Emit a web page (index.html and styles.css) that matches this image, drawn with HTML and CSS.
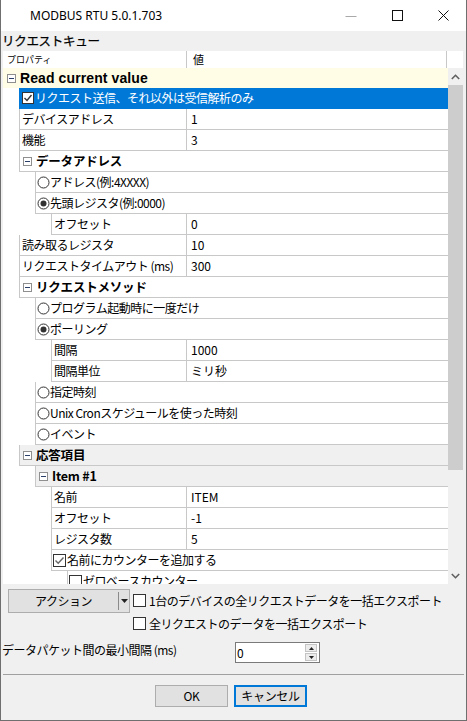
FILE: index.html
```html
<!DOCTYPE html>
<html lang="ja">
<head>
<meta charset="utf-8">
<title>MODBUS RTU</title>
<link rel="stylesheet" href="styles.css">
</head>
<body>
<div class="win">
  <div class="titlebar">
    <span class="title">MODBUS RTU 5.0.1.703</span>
    <div class="wctrls">
      <span class="wbtn"><svg width="12" height="12" viewBox="0 0 12 12"><line x1="0.5" y1="6.5" x2="11.5" y2="6.5" stroke="#a9a9a9" stroke-width="1"/></svg></span>
      <span class="wbtn"><svg width="11" height="11" viewBox="0 0 11 11"><rect x="0.5" y="0.5" width="10" height="10" fill="none" stroke="#111" stroke-width="1"/></svg></span>
      <span class="wbtn"><svg width="11" height="11" viewBox="0 0 11 11"><path d="M0.5 0.5 L10.5 10.5 M10.5 0.5 L0.5 10.5" stroke="#111" stroke-width="1"/></svg></span>
    </div>
  </div>

  <div class="qlabel">リクエストキュー</div>

  <div class="grid">
    <div class="ghead">
      <div class="hname">プロパティ</div>
      <div class="hval">値</div>
    </div>
    <div class="gbody">
      <div class="rows">
        <div class="row top">
          <svg class="minus" width="9" height="9" viewBox="0 0 9 9"><rect x="0.5" y="0.5" width="8" height="8" fill="#fff" stroke="#8f8f8f"/><line x1="2" y1="4.5" x2="7" y2="4.5" stroke="#2b3f6b"/></svg>
          <span class="btxt">Read current value</span>
        </div>
        <div class="row g1 sel"><div class="gut"></div><div class="main">
          <svg class="cb" width="12" height="12" viewBox="0 0 12 12"><rect x="0.5" y="0.5" width="11" height="11" fill="#fff" stroke="#333"/><polyline points="2.5,6 5,8.5 9.5,3" fill="none" stroke="#333" stroke-width="1.4"/></svg>
          <span class="tx">リクエスト送信、それ以外は受信解析のみ</span></div></div>
        <div class="row g1"><div class="gut"></div><div class="main"><div class="nm">デバイスアドレス</div><div class="val">1</div></div></div>
        <div class="row g1"><div class="gut"></div><div class="main"><div class="nm">機能</div><div class="val">3</div></div></div>
        <div class="row g1"><div class="gut"></div><div class="main grp">
          <svg class="minus" width="9" height="9" viewBox="0 0 9 9"><rect x="0.5" y="0.5" width="8" height="8" fill="#fff" stroke="#8f8f8f"/><line x1="2" y1="4.5" x2="7" y2="4.5" stroke="#2b3f6b"/></svg>
          <span class="gtx">データアドレス</span></div></div>
        <div class="row g2"><div class="gut"></div><div class="main opt">
          <svg class="rd" width="13" height="13" viewBox="0 0 13 13"><circle cx="6.5" cy="6.5" r="5.5" fill="#fff" stroke="#333"/></svg>
          <span class="tx">アドレス(例:4XXXX)</span></div></div>
        <div class="row g2"><div class="gut"></div><div class="main opt">
          <svg class="rd" width="13" height="13" viewBox="0 0 13 13"><circle cx="6.5" cy="6.5" r="5.5" fill="#fff" stroke="#333"/><circle cx="6.5" cy="6.5" r="3" fill="#333"/></svg>
          <span class="tx">先頭レジスタ(例:0000)</span></div></div>
        <div class="row g3"><div class="gut"></div><div class="main"><div class="nm">オフセット</div><div class="val">0</div></div></div>
        <div class="row g1"><div class="gut"></div><div class="main"><div class="nm">読み取るレジスタ</div><div class="val">10</div></div></div>
        <div class="row g1"><div class="gut"></div><div class="main"><div class="nm">リクエストタイムアウト (ms)</div><div class="val">300</div></div></div>
        <div class="row g1"><div class="gut"></div><div class="main grp">
          <svg class="minus" width="9" height="9" viewBox="0 0 9 9"><rect x="0.5" y="0.5" width="8" height="8" fill="#fff" stroke="#8f8f8f"/><line x1="2" y1="4.5" x2="7" y2="4.5" stroke="#2b3f6b"/></svg>
          <span class="gtx">リクエストメソッド</span></div></div>
        <div class="row g2"><div class="gut"></div><div class="main opt">
          <svg class="rd" width="13" height="13" viewBox="0 0 13 13"><circle cx="6.5" cy="6.5" r="5.5" fill="#fff" stroke="#333"/></svg>
          <span class="tx">プログラム起動時に一度だけ</span></div></div>
        <div class="row g2"><div class="gut"></div><div class="main opt">
          <svg class="rd" width="13" height="13" viewBox="0 0 13 13"><circle cx="6.5" cy="6.5" r="5.5" fill="#fff" stroke="#333"/><circle cx="6.5" cy="6.5" r="3" fill="#333"/></svg>
          <span class="tx">ポーリング</span></div></div>
        <div class="row g3"><div class="gut"></div><div class="main"><div class="nm">間隔</div><div class="val">1000</div></div></div>
        <div class="row g3"><div class="gut"></div><div class="main"><div class="nm">間隔単位</div><div class="val">ミリ秒</div></div></div>
        <div class="row g2"><div class="gut"></div><div class="main opt">
          <svg class="rd" width="13" height="13" viewBox="0 0 13 13"><circle cx="6.5" cy="6.5" r="5.5" fill="#fff" stroke="#333"/></svg>
          <span class="tx">指定時刻</span></div></div>
        <div class="row g2"><div class="gut"></div><div class="main opt">
          <svg class="rd" width="13" height="13" viewBox="0 0 13 13"><circle cx="6.5" cy="6.5" r="5.5" fill="#fff" stroke="#333"/></svg>
          <span class="tx">Unix Cronスケジュールを使った時刻</span></div></div>
        <div class="row g2"><div class="gut"></div><div class="main opt">
          <svg class="rd" width="13" height="13" viewBox="0 0 13 13"><circle cx="6.5" cy="6.5" r="5.5" fill="#fff" stroke="#333"/></svg>
          <span class="tx">イベント</span></div></div>
        <div class="row g1"><div class="gut"></div><div class="main grp shade">
          <svg class="minus" width="9" height="9" viewBox="0 0 9 9"><rect x="0.5" y="0.5" width="8" height="8" fill="#fff" stroke="#8f8f8f"/><line x1="2" y1="4.5" x2="7" y2="4.5" stroke="#2b3f6b"/></svg>
          <span class="gtx">応答項目</span></div></div>
        <div class="row g2"><div class="gut"></div><div class="main grp shade">
          <svg class="minus" width="9" height="9" viewBox="0 0 9 9"><rect x="0.5" y="0.5" width="8" height="8" fill="#fff" stroke="#8f8f8f"/><line x1="2" y1="4.5" x2="7" y2="4.5" stroke="#2b3f6b"/></svg>
          <span class="gtx">Item #1</span></div></div>
        <div class="row g3"><div class="gut"></div><div class="main"><div class="nm">名前</div><div class="val">ITEM</div></div></div>
        <div class="row g3"><div class="gut"></div><div class="main"><div class="nm">オフセット</div><div class="val">-1</div></div></div>
        <div class="row g3"><div class="gut"></div><div class="main"><div class="nm">レジスタ数</div><div class="val">5</div></div></div>
        <div class="row g3"><div class="gut"></div><div class="main opt">
          <svg class="cb2" width="13" height="13" viewBox="0 0 13 13"><rect x="0.5" y="0.5" width="12" height="12" fill="#fff" stroke="#333"/><polyline points="2.5,6.5 5.2,9.2 10.5,3.5" fill="none" stroke="#666" stroke-width="1.4"/></svg>
          <span class="tx">名前にカウンターを追加する</span></div></div>
        <div class="row g4"><div class="gut"></div><div class="main opt">
          <svg class="cb2" width="13" height="13" viewBox="0 0 13 13"><rect x="0.5" y="0.5" width="12" height="12" fill="#fff" stroke="#333"/></svg>
          <span class="tx">ゼロベースカウンター</span></div></div>
      </div>
      <div class="vscroll">
        <div class="sbtn"><svg width="9" height="6" viewBox="0 0 9 6"><polyline points="0.8,5 4.5,1.3 8.2,5" fill="none" stroke="#606060" stroke-width="1.6"/></svg></div>
        <div class="thumb"></div>
        <div class="track"></div>
        <div class="sbtn"><svg width="9" height="6" viewBox="0 0 9 6"><polyline points="0.8,1 4.5,4.7 8.2,1" fill="none" stroke="#606060" stroke-width="1.6"/></svg></div>
      </div>
    </div>
  </div>

  <div class="exprow">
    <div class="actbtn">
      <span class="actlabel">アクション</span>
      <span class="actdrop"><svg width="7" height="4" viewBox="0 0 7 4"><polygon points="0,0 7,0 3.5,4" fill="#222"/></svg></span>
    </div>
    <div class="chks">
      <label class="chk"><span class="box"></span><span>1台のデバイスの全リクエストデータを一括エクスポート</span></label>
      <label class="chk"><span class="box"></span><span>全リクエストのデータを一括エクスポート</span></label>
    </div>
  </div>

  <div class="minrow">
    <span class="mlabel">データパケット間の最小間隔 (ms)</span>
    <div class="spin">
      <span class="spinval">0</span>
      <div class="spinbtns">
        <span class="sb"><svg width="5" height="3" viewBox="0 0 5 3"><polygon points="0,3 5,3 2.5,0" fill="#222"/></svg></span>
        <span class="sb"><svg width="5" height="3" viewBox="0 0 5 3"><polygon points="0,0 5,0 2.5,3" fill="#222"/></svg></span>
      </div>
    </div>
  </div>

  <div class="sep"></div>

  <div class="btnrow">
    <button class="btn">OK</button>
    <button class="btn def">キャンセル</button>
  </div>
</div>
</body>
</html>
```

FILE: styles.css
```css
* { box-sizing: border-box; }
html, body { margin: 0; padding: 0; background: #f0f0f0; }
body {
  font-family: "Noto Sans CJK JP", "Noto Sans", sans-serif;
  font-size: 12px;
  letter-spacing: -0.5px;
  color: #000;
}
.win {
  width: 467px;
  height: 721px;
  background: #f0f0f0;
  border: 1px solid #6f6f6f;
  border-top: none;
  display: flex;
  flex-direction: column;
  overflow: hidden;
}
.titlebar {
  height: 31px;
  background: #fff;
  display: flex;
  align-items: center;
  flex: none;
}
.title {
  font-family: "Noto Sans", sans-serif;
  font-size: 12px;
  letter-spacing: 0;
  padding-left: 29px;
  flex: 1;
  line-height: 31px;
}
.wctrls { display: flex; height: 31px; }
.wbtn {
  width: 46px;
  height: 31px;
  display: flex;
  align-items: center;
  justify-content: center;
}
.qlabel {
  height: 20px;
  line-height: 20px;
  padding-left: 1px;
  font-size: 12.5px;
  letter-spacing: -0.3px;
  -webkit-text-stroke: 0.25px #000;
  flex: none;
}
.grid {
  margin-left: 2px;
  width: 460px;
  height: 533px;
  background: #fff;
  flex: none;
  display: flex;
  flex-direction: column;
}
.ghead {
  height: 17px;
  display: flex;
  flex: none;
  font-size: 9px;
  letter-spacing: 0;
  line-height: 17px;
}
.hname {
  width: 184px;
  border-right: 1px solid #c8c8c8;
  padding-left: 4px;
}
.hval {
  width: 260px;
  border-right: 1px solid #c8c8c8;
  padding-left: 6px;
  font-size: 11px;
}
.gbody {
  flex: 1;
  display: flex;
  min-height: 0;
}
.rows {
  width: 445px;
  overflow: hidden;
  display: flex;
  flex-direction: column;
}
.row {
  height: 21px;
  display: flex;
  flex: none;
}
.row.top {
  height: 20px;
  background: #fffde6;
  align-items: center;
}
.row.top .minus { margin-left: 4px; }
.btxt {
  font-family: "Liberation Sans", sans-serif;
  font-weight: bold;
  font-size: 14px;
  margin-left: 4px;
  letter-spacing: 0.1px;
}
.gut { flex: none; }
.g1 .gut { width: 16px; }
.g2 .gut { width: 32px; }
.g3 .gut { width: 48px; }
.g4 .gut { width: 64px; }
.main {
  flex: 1;
  display: flex;
  align-items: center;
  border-left: 1px solid #c8c8c8;
  border-bottom: 1px solid #c8c8c8;
  line-height: 20px;
  white-space: nowrap;
  overflow: hidden;
}
.nm { padding-left: 2px; height: 20px; flex: none; }
.g1 .nm { width: 166px; }
.g2 .nm { width: 150px; }
.g3 .nm { width: 134px; }
.g4 .nm { width: 118px; }
.val {
  flex: 1;
  height: 20px;
  border-left: 1px solid #c8c8c8;
  padding-left: 4px;
  letter-spacing: 0;
}
.sel .main {
  background: #0078d7;
  color: #fff;
  border-left-color: #0078d7;
  border-bottom-color: #0078d7;
}
.sel .cb { margin-left: 2px; margin-right: 1px; flex: none; }
.grp .minus { margin-left: 3px; margin-right: 4px; flex: none; }
.gtx { font-weight: bold; font-size: 12.5px; letter-spacing: -0.2px; }
.shade { background: #f0f0f0; }
.opt .rd { margin-left: 1px; flex: none; }
.opt .cb2 { margin-left: 1px; margin-right: 1px; flex: none; }
.vscroll {
  width: 15px;
  background: #f0f0f0;
  display: flex;
  flex-direction: column;
}
.sbtn {
  height: 17px;
  display: flex;
  align-items: center;
  justify-content: center;
  flex: none;
}
.thumb {
  height: 385px;
  background: #cdcdcd;
  flex: none;
}
.track { flex: 1; }

.exprow {
  display: flex;
  margin-top: 5px;
  margin-left: 7px;
  flex: none;
}
.actbtn {
  width: 122px;
  height: 24px;
  border: 1px solid #adadad;
  background: #e1e1e1;
  display: flex;
  align-items: stretch;
}
.actlabel {
  flex: 1;
  text-align: center;
  line-height: 22px;
}
.actdrop {
  width: 11px;
  display: flex;
  align-items: center;
  justify-content: center;
  border-left: 1px solid #8a8a8a;
  margin: 2px 0;
}
.chks {
  margin-left: 3px;
  display: flex;
  flex-direction: column;
}
.chk {
  height: 23px;
  display: flex;
  align-items: center;
  line-height: 23px;
}
.chk .box {
  width: 13px;
  height: 13px;
  border: 1px solid #333;
  background: #fff;
  margin-right: 3px;
  flex: none;
}
.minrow {
  display: flex;
  align-items: flex-start;
  margin-top: 7px;
  flex: none;
}
.mlabel {
  width: 234px;
  padding-left: 1px;
  line-height: 16px;
}
.spin {
  width: 85px;
  height: 21px;
  border: 1px solid #7a7a7a;
  background: #fff;
  display: flex;
  align-items: center;
}
.spinval { flex: 1; padding-left: 1px; line-height: 19px; }
.spinbtns {
  display: flex;
  flex-direction: column;
  margin-right: 2px;
  gap: 1px;
}
.sb {
  width: 12px;
  height: 8px;
  background: #ececec;
  border: 1px solid #c4c4c4;
  display: flex;
  align-items: center;
  justify-content: center;
}
.sep {
  margin: 11px 2px 0 2px;
  height: 1px;
  background: #a0a0a0;
  flex: none;
}
.btnrow {
  display: flex;
  margin-top: 10px;
  padding-left: 154px;
  gap: 6px;
  flex: none;
}
.btn {
  width: 73px;
  height: 22px;
  font-family: "Noto Sans CJK JP", "Noto Sans", sans-serif;
  font-size: 12px;
  letter-spacing: -0.3px;
  background: #e1e1e1;
  border: 1px solid #adadad;
  padding: 0;
  color: #000;
  line-height: 18px;
}
.btn.def { border: 2px solid #0078d7; }
```
